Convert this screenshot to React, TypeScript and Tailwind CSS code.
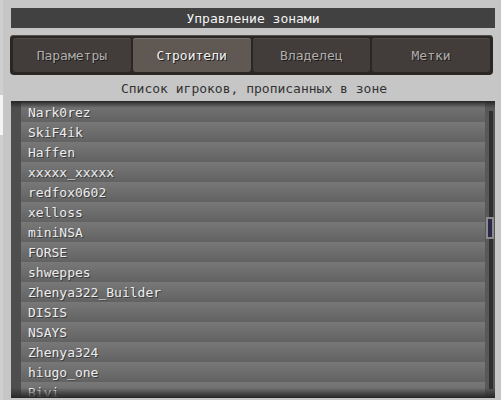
const players = [
  'Nark0rez',
  'SkiF4ik',
  'Haffen',
  'xxxxx_xxxxx',
  'redfox0602',
  'xelloss',
  'miniNSA',
  'FORSE',
  'shweppes',
  'Zhenya322_Builder',
  'DISIS',
  'NSAYS',
  'Zhenya324',
  'hiugo_one',
  'Bivi',
];

const tabs = ['Параметры', 'Строители', 'Владелец', 'Метки'];

export default function App() {
  return (
    <div
      className="w-[501px] h-[400px] bg-[#c6c6c6] flex overflow-hidden text-[13px] leading-none"
      style={{ fontFamily: '"DejaVu Sans Mono", "Liberation Mono", monospace' }}
    >
      {/* left edge strip */}
      <div className="w-[3px] flex flex-col bg-[#cfcfcf]">
        <div className="h-[95px]" />
        <div className="h-[40px] bg-[#f4f4f4]" />
      </div>

      <div className="flex-1 flex flex-col pl-[8px] pr-[6px] pt-[8px]">
        {/* title */}
        <div className="h-[20px] bg-[#414141] flex items-center justify-center text-[#f4f4f4] pt-[1px]">
          Управление зонами
        </div>

        {/* tabs */}
        <div className="mt-[7px] ml-[-1px] mr-[2px] h-[40px] rounded-[4px] bg-[#2a2624] p-[3px] flex gap-[2px] shadow-[inset_0_1px_0_#55504c]">
          {tabs.map((t, i) => {
            const active = i === 1;
            return (
              <div
                key={t}
                className={`flex-1 flex items-center justify-center rounded-[3px] ${
                  active
                    ? 'bg-[#5f5853] text-[#f2f2f2] shadow-[inset_0_1px_0_#7a726c]'
                    : 'bg-[#423d3b] text-[#b0adab] shadow-[inset_0_1px_0_#504a47]'
                } [text-shadow:1px_1px_0_#1e1c1b]`}
              >
                {t}
              </div>
            );
          })}
        </div>

        {/* subtitle */}
        <div className="h-[26px] flex items-center justify-center text-[#333333] pl-[2px]">
          Список игроков, прописанных в зоне
        </div>

        {/* list panel */}
        <div className="relative flex-1 mb-[2px] bg-[#4e4e4e] flex overflow-hidden">
          <div className="w-[10px]" />
          <div className="flex-1 flex flex-col pt-[1px]">
            {players.map((p) => (
              <div
                key={p}
                className="h-[20px] shrink-0 bg-gradient-to-b from-[#787878] to-[#626262] flex items-center pl-[7px] text-[#ededed] [text-shadow:1px_1px_0_#3c3c3c]"
              >
                {p}
              </div>
            ))}
          </div>
          <div className="w-[10px] flex bg-[#585858]">
            <div className="w-[4px]" />
            <div className="w-[4px] mt-[10px] mb-[9px] bg-[#2f2f2f]" />
          </div>

          {/* scrollbar thumb */}
          <div className="absolute right-[1px] top-[116px] w-[8px] h-[22px] border-2 border-[#8c8c8c] bg-[#2a2a48]" />

          {/* top / bottom shading */}
          <div className="absolute left-0 right-0 top-0 h-[7px] bg-gradient-to-b from-[#262626] to-transparent" />
          <div className="absolute left-0 right-0 bottom-0 h-[10px] bg-gradient-to-t from-[#262626] to-transparent" />
        </div>
      </div>
    </div>
  );
}
